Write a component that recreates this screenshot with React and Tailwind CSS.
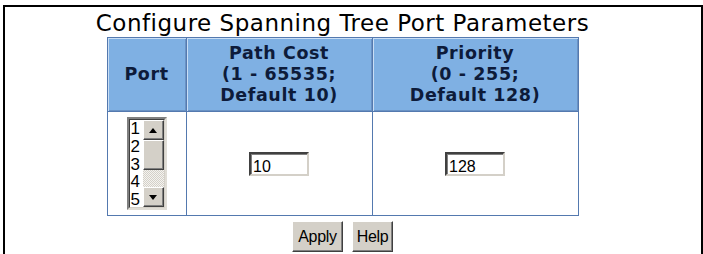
import React from "react";

const ports = ["1", "2", "3", "4", "5"];

function ListBox() {
  return (
    <div className="mx-auto flex h-[93px] w-[40px] border-2 border-t-[#808080] border-l-[#808080] border-b-[#e0ddd6] border-r-[#e0ddd6] bg-white">
      <div className="flex h-full w-[38px] border border-t-[#404040] border-l-[#404040] border-b-[#d4d0c8] border-r-[#d4d0c8]">
        <div className="flex-1 pl-[1px] font-['Liberation_Sans',Arial,sans-serif] text-[17px] leading-[17.8px] text-black">
          {ports.map((p) => (
            <div key={p}>{p}</div>
          ))}
        </div>
        <div className="flex w-[21px] flex-col bg-[repeating-conic-gradient(#d4d0c8_0_25%,#f4f3f0_0_50%)] bg-[length:2px_2px]">
          <ScrollButton dir="up" />
          <div className="h-[30px] border border-t-[#fff] border-l-[#fff] border-b-[#404040] border-r-[#404040] bg-[#d4d0c8] shadow-[inset_-1px_-1px_0_#808080]" />
          <div className="flex-1" />
          <ScrollButton dir="down" />
        </div>
      </div>
    </div>
  );
}

function ScrollButton({ dir }) {
  return (
    <div className="flex h-[20px] items-center justify-center border border-t-[#fff] border-l-[#fff] border-b-[#404040] border-r-[#404040] bg-[#d4d0c8] shadow-[inset_-1px_-1px_0_#808080]">
      <svg width="8" height="5" viewBox="0 0 8 5">
        {dir === "up" ? (
          <polygon points="4,0 8,5 0,5" fill="#000" />
        ) : (
          <polygon points="0,0 8,0 4,5" fill="#000" />
        )}
      </svg>
    </div>
  );
}

function TextBox({ value }) {
  return (
    <div className="mx-auto h-[24px] w-[60px] border-2 border-t-[#404040] border-l-[#404040] border-b-[#d4d0c8] border-r-[#d4d0c8] bg-white shadow-[inset_1px_1px_0_#808080]">
      <input
        defaultValue={value}
        className="h-full w-full bg-transparent pl-[2px] font-['Liberation_Sans',Arial,sans-serif] text-[16px] leading-none text-black outline-none"
      />
    </div>
  );
}

function Button({ children, w }) {
  return (
    <button
      className={`h-[31px] ${w} border border-t-[#fff] border-l-[#fff] border-b-[#404040] border-r-[#404040] bg-[#d4d0c8] font-['Liberation_Sans',Arial,sans-serif] text-[16px] tracking-[-0.3px] text-black shadow-[inset_-1px_-1px_0_#808080]`}
    >
      {children}
    </button>
  );
}

const headCell =
  "border border-[#5479af] bg-[#7fb0e3] px-1 py-[5px] align-middle text-center font-['DejaVu_Sans',Verdana,sans-serif] text-[17.5px] font-bold leading-[21px] tracking-[0.6px] text-[#0d1b3a] shadow-[inset_1px_1px_0_#c9def5,inset_-1px_-1px_0_#6a92c4]";

export default function App() {
  return (
    <div className="h-[254px] w-[703px] overflow-hidden bg-white">
      <div className="ml-[3px] mt-[5px] h-[300px] w-[700px] border-l-2 border-r-2 border-t-2 border-black">
        <div className="flex flex-col items-center pr-[21px]">
          <h1 className="mt-[2px] font-['DejaVu_Sans',Verdana,sans-serif] text-[23px] font-normal leading-[28px] tracking-[0.5px] text-black">
            Configure Spanning Tree Port Parameters
          </h1>
          <table className="border-collapse">
            <thead>
              <tr className="h-[73px]">
                <th className={`${headCell} w-[79px]`}>Port</th>
                <th className={`${headCell} w-[186px]`}>
                  Path Cost
                  <br />
                  (1 - 65535;
                  <br />
                  Default 10)
                </th>
                <th className={`${headCell} w-[206px]`}>
                  Priority
                  <br />
                  (0 - 255;
                  <br />
                  Default 128)
                </th>
              </tr>
            </thead>
            <tbody>
              <tr className="h-[104px]">
                <td className="border border-[#5479af] align-middle">
                  <ListBox />
                </td>
                <td className="border border-[#5479af] align-middle">
                  <TextBox value="10" />
                </td>
                <td className="border border-[#5479af] align-middle">
                  <TextBox value="128" />
                </td>
              </tr>
            </tbody>
          </table>
          <div className="mt-[5px] flex gap-[9px]">
            <Button w="w-[51px]">Apply</Button>
            <Button w="w-[41px]">Help</Button>
          </div>
        </div>
      </div>
    </div>
  );
}
